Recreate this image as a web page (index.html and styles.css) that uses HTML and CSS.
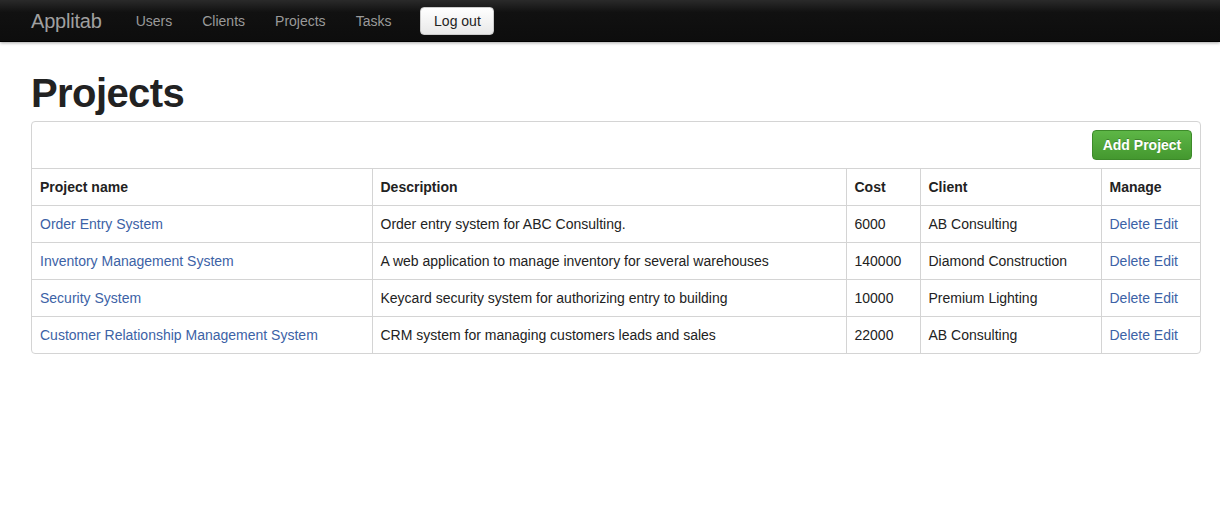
FILE: index.html
```html
<!DOCTYPE html>
<html>
<head>
<meta charset="utf-8">
<link rel="stylesheet" href="styles.css">
</head>
<body>
<div class="navbar">
  <div class="nav-inner">
    <a class="brand">Applitab</a>
    <ul class="nav">
      <li><a>Users</a></li>
      <li><a>Clients</a></li>
      <li><a>Projects</a></li>
      <li><a>Tasks</a></li>
    </ul>
    <button class="btn-logout">Log out</button>
  </div>
</div>
<div class="container">
  <h1 class="title">Projects</h1>
  <div class="panel">
    <div class="toolbar">
      <button class="btn-success">Add Project</button>
    </div>
    <table class="grid">
      <colgroup>
        <col class="c1"><col class="c2"><col class="c3"><col class="c4"><col class="c5">
      </colgroup>
      <thead>
        <tr><th>Project name</th><th>Description</th><th>Cost</th><th>Client</th><th>Manage</th></tr>
      </thead>
      <tbody>
        <tr><td><a>Order Entry System</a></td><td>Order entry system for ABC Consulting.</td><td>6000</td><td>AB Consulting</td><td><a>Delete</a> <a>Edit</a></td></tr>
        <tr><td><a>Inventory Management System</a></td><td>A web application to manage inventory for several warehouses</td><td>140000</td><td>Diamond Construction</td><td><a>Delete</a> <a>Edit</a></td></tr>
        <tr><td><a>Security System</a></td><td>Keycard security system for authorizing entry to building</td><td>10000</td><td>Premium Lighting</td><td><a>Delete</a> <a>Edit</a></td></tr>
        <tr><td><a>Customer Relationship Management System</a></td><td>CRM system for managing customers leads and sales</td><td>22000</td><td>AB Consulting</td><td><a>Delete</a> <a>Edit</a></td></tr>
      </tbody>
    </table>
  </div>
</div>
</body>
</html>
```

FILE: styles.css
```css
* { box-sizing: border-box; }
html, body { margin: 0; padding: 0; background: #fff; }
body {
  font-family: "Liberation Sans", Arial, Helvetica, sans-serif;
  font-size: 14px;
  color: #222;
}
.navbar {
  height: 42px;
  background: linear-gradient(#2a2a2a, #111 30%, #0d0d0d);
  border-bottom: 1px solid #000;
  box-shadow: 0 1px 3px rgba(0,0,0,0.35);
}
.nav-inner {
  display: flex;
  align-items: center;
  height: 41px;
  padding-left: 31px;
}
.brand {
  font-size: 20px;
  color: #a0a0a0;
  margin-right: 20px;
  line-height: 42px;
  letter-spacing: -0.2px;
}
.nav {
  display: flex;
  list-style: none;
  margin: 0;
  padding: 0;
}
.nav li a {
  display: block;
  padding: 0 15px;
  color: #9a9a9a;
  font-size: 14px;
  line-height: 42px;
}
.nav li:last-child a { padding-right: 17px; }
.nav li:first-child a { padding-left: 14px; }
.btn-logout {
  margin-left: 12px;
  height: 28px;
  width: 74px;
  font-family: inherit;
  font-size: 14px;
  color: #222;
  background: linear-gradient(#ffffff, #e8e8e8);
  border: 1px solid #ccc;
  border-radius: 4px;
  padding: 0;
  margin-top: 0;
}
.container {
  padding: 0 20px 0 31px;
}
.title {
  margin: 31px 0 8px 0;
  font-size: 40px;
  line-height: 40px;
  font-weight: bold;
  color: #222;
  letter-spacing: -0.6px;
}
.panel {
  width: 1170px;
  border: 1px solid #d4d4d4;
  border-radius: 4px;
  overflow: hidden;
}
.toolbar {
  display: flex;
  justify-content: flex-end;
  height: 47px;
  padding: 8px 8px 0 0;
  border-bottom: 1px solid #d4d4d4;
}
.btn-success {
  width: 100px;
  height: 30px;
  font-family: inherit;
  font-size: 14px;
  font-weight: bold;
  color: #fff;
  background: linear-gradient(#5db646, #44982f);
  border: 1px solid #3d8a2a;
  border-radius: 4px;
  text-shadow: 0 -1px 0 rgba(0,0,0,0.25);
  padding: 0;
}
.grid {
  width: 100%;
  border-collapse: collapse;
  table-layout: fixed;
}
.c1 { width: 340px; }
.c2 { width: 474px; }
.c3 { width: 74px; }
.c4 { width: 181px; }
.c5 { width: auto; }
.grid th, .grid td {
  height: 37px;
  padding: 0 8px;
  text-align: left;
  vertical-align: middle;
  border-top: 1px solid #d4d4d4;
  border-left: 1px solid #d4d4d4;
  white-space: nowrap;
  overflow: hidden;
}
.grid thead th { border-top: none; height: 36px; }
.grid tbody td { height: 37px; }
.grid th:first-child, .grid td:first-child { border-left: none; }
.grid th { font-weight: bold; color: #222; }
.grid a { color: #3c62a6; }
```
